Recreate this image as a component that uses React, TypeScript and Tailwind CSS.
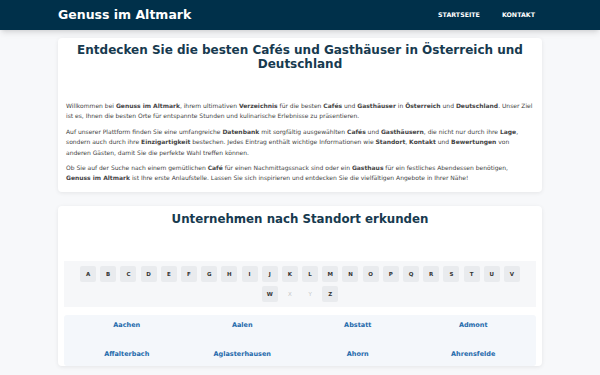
const letters = "ABCDEFGHIJKLMNOPQRSTUVWXYZ".split("");
const disabled = ["X", "Y"];

const cities = [
  "Aachen",
  "Aalen",
  "Abstatt",
  "Admont",
  "Affalterbach",
  "Aglasterhausen",
  "Ahorn",
  "Ahrensfelde",
];

export default function App() {
  return (
    <div className="min-h-screen bg-[#f7f8fa] font-['DejaVu_Sans',sans-serif] text-[#333]">
      <header className="h-[30px] bg-[#00304a] shadow-md">
        <div className="mx-auto flex h-full w-[484px] items-center justify-between">
          <span className="text-[12.5px] font-bold text-white">Genuss im Altmark</span>
          <nav className="flex gap-[22px] pr-[7px] text-[6.3px] font-bold uppercase text-white">
            <a>Startseite</a>
            <a>Kontakt</a>
          </nav>
        </div>
      </header>

      <main className="mx-auto w-[484px] pt-[8px]">
        <section className="rounded-[4px] bg-white px-[8px] pb-[8px] pt-[5px] shadow-[0_1px_4px_rgba(0,0,0,0.08)]">
          <h1 className="px-[4px] text-center text-[12px] font-bold leading-[14px] text-[#173a4f]">
            Entdecken Sie die besten Cafés und Gasthäuser in Österreich und Deutschland
          </h1>

          {/* platzhalter über dem text */}
          <div className="h-[30px]" />

          <div className="flex flex-col gap-[5px] text-[6px] leading-[10.4px] text-[#444]">
            <p>
              Willkommen bei <b>Genuss im Altmark</b>, ihrem ultimativen <b>Verzeichnis</b> für die besten{" "}
              <b>Cafés</b> und <b>Gasthäuser</b> in <b>Österreich</b> und <b>Deutschland</b>. Unser Ziel ist
              es, Ihnen die besten Orte für entspannte Stunden und kulinarische Erlebnisse zu präsentieren.
            </p>
            <p>
              Auf unserer Plattform finden Sie eine umfangreiche <b>Datenbank</b> mit sorgfältig ausgewählten{" "}
              <b>Cafés</b> und <b>Gasthäusern</b>, die nicht nur durch ihre <b>Lage</b>, sondern auch durch ihre{" "}
              <b>Einzigartigkeit</b> bestechen. Jedes Eintrag enthält wichtige Informationen wie{" "}
              <b>Standort</b>, <b>Kontakt</b> und <b>Bewertungen</b> von anderen Gästen, damit Sie die perfekte
              Wahl treffen können.
            </p>
            <p>
              Ob Sie auf der Suche nach einem gemütlichen <b>Café</b> für einen Nachmittagssnack sind oder ein{" "}
              <b>Gasthaus</b> für ein festliches Abendessen benötigen, <b>Genuss im Altmark</b> ist Ihre erste
              Anlaufstelle. Lassen Sie sich inspirieren und entdecken Sie die vielfältigen Angebote in Ihrer Nähe!
            </p>
          </div>
        </section>

        <section className="mt-[14px] rounded-[4px] bg-white px-[6px] pt-[5px] shadow-[0_1px_4px_rgba(0,0,0,0.08)]">
          <h2 className="text-center text-[11.8px] font-bold leading-[16px] text-[#173a4f]">
            Unternehmen nach Standort erkunden
          </h2>

          <div className="h-[34px]" />

          <div className="flex flex-wrap justify-center gap-x-[4.2px] gap-y-[4px] bg-[#f6f7f9] px-[14px] py-[5px]">
            {letters.map((l) => {
              const off = disabled.includes(l);
              return (
                <span
                  key={l}
                  className={
                    off
                      ? "flex h-[16px] min-w-[16px] items-center justify-center px-[3px] text-[5.5px] text-[#c4c4c4]"
                      : "flex h-[16px] min-w-[16px] items-center justify-center rounded-[2px] bg-[#e9ebee] px-[3px] text-[5.5px] font-bold text-[#333]"
                  }
                >
                  {l}
                </span>
              );
            })}
          </div>

          <div className="mt-[8px] grid grid-cols-4 gap-x-[6px] gap-y-[7px] rounded-[3px] bg-[#f4f7fb] px-[8px]">
            {cities.map((c) => (
              <a
                key={c}
                className="flex h-[22px] items-center justify-center text-[6.5px] font-bold text-[#1f6aab]"
              >
                {c}
              </a>
            ))}
          </div>
        </section>
      </main>
    </div>
  );
}
